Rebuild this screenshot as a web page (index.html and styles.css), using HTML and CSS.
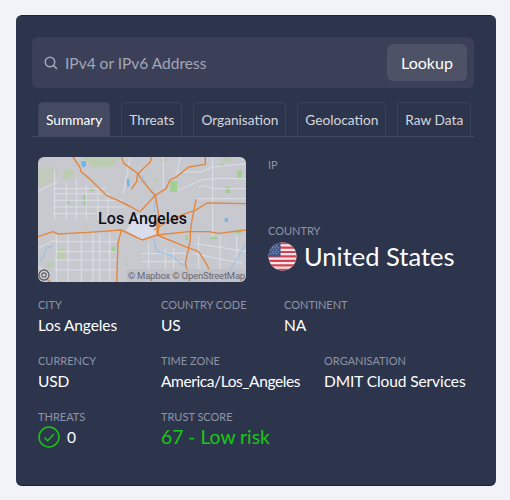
FILE: index.html
```html
<!DOCTYPE html>
<html lang="en">
<head>
<meta charset="utf-8">
<title>IP Lookup</title>
<link rel="stylesheet" href="styles.css">
</head>
<body>
<main class="card">
  <form class="search">
    <svg class="search-icon" viewBox="0 0 14 14" width="14" height="14"><circle cx="6" cy="6" r="4.7"/><path d="M9.5 9.5L13 13"/></svg>
    <span class="placeholder">IPv4 or IPv6 Address</span>
    <span class="lookup">Lookup</span>
  </form>
  <nav class="tabs">
    <span class="tab active">Summary</span>
    <span class="tab">Threats</span>
    <span class="tab">Organisation</span>
    <span class="tab">Geolocation</span>
    <span class="tab">Raw Data</span>
  </nav>
  <section class="top">
    <div class="map">
      <svg class="map-art" viewBox="24 21 624 375" preserveAspectRatio="none">
        <rect x="24" y="21" width="624" height="375" fill="#c8c9cf"/>
        <g fill="#bcccb0">
          <path d="M24 55l40-8 26 22-20 28-46 12z" fill="#c2c9bd"/>
          <path d="M154 21h120l-30 30h-55l-15-14z"/>
          <path d="M100 62l28-4 4 22-34 8z"/>
          <path d="M371 86l13 -3 1 10-14 3z"/>
          <path d="M79 295h26l4 30-25 8z"/>
          <path d="M49 340l22-4-2 16-20 3z"/>
          <path d="M395 25h18l-6 12h-14z" fill="#c8c4aa"/>
          <path d="M578 21h24v14h-24z"/>
        </g>
        <g fill="#9fd091">
          <path d="M421 93h20v33h-20z"/><path d="M586 109h15v21h-15z"/><path d="M621 61h15v22h-15z"/>
          <path d="M571 41h10v7h-10z"/><path d="M179 118h13v6h-13z"/><path d="M109 151h10v12h-10z"/>
          <path d="M159 136h10v30h-10z"/><path d="M244 290h12v15h-12z"/><path d="M466 255h8v15h-8z"/>
          <path d="M541 260h21v8h-21z"/><path d="M616 240h20v10h-20z"/><path d="M286 340h8v4h-8z"/>
        </g>
        <g class="minor">
          <path d="M24 124l60-30M69 116h160M69 131h170M69 151h210M69 171h220M69 191h130M74 60v150M109 96v114M139 86v124M169 106v104M204 116v94M234 136v74"/>
          <path d="M300 21l-20 110M400 21v100M450 21l-10 60"/>
          <path d="M24 295l50-25M74 275h186M74 305h186M74 330h186M74 360h186M79 250v150M114 250v150M154 250v150M189 250v150M209 250v150M239 250v150"/>
          <path d="M336 310h130M336 335h130M336 360h130M356 275v125M406 290v110M431 295v105"/>
          <path d="M496 280l152 25M486 310l150 30M506 255v110M548 21v240M548 86h100M506 91l42-5M506 111l20-5 22 10h100M446 121l65-30M501 146h147M436 66h75l35-15 102-10"/>
          <path d="M570 255v141M620 255v80M24 350l40 20"/>
        </g>
        <path d="M288 240l36-48 60 42-4 22-50 18z" fill="#d9dcea"/>
        <g class="water-line">
          <path d="M336 76l10 25 15 20 15 25 -4 40"/>
          <path d="M371 265l10 40 40 10 45 35"/>
          <path d="M648 280l-47 80"/>
          <path d="M69 288l-20 7-10 25-10 15"/>
        </g>
        <g fill="#6fb6e8">
          <path d="M154 33h13l2 13-9 7-6-8z"/><path d="M290 88h8l1 20-7 3z"/><path d="M584 205h10v11h-10z"/>
        </g>
        <g class="road">
          <path d="M129 21l20 30 5 15 25 20 25 25 25 25 45 20 30 15 26 15"/>
          <path d="M274 21l8 20 42 30 12 20 30 35 10 10 9 54v60"/>
          <path d="M364 21l-3 15-25 23-14 16-2 20-16 23"/>
          <path d="M526 21v22l-50 8-40 32-15 6-13 27-32 20-46 49"/>
          <path d="M24 260l45-15 15 7 90-5 100-7 62 30 45-15 95-10h60l30 5 82-10"/>
          <path d="M274 240l-10 40-4 120"/>
          <path d="M648 161l-117-2-35 22-30 10-45 19-50 30"/>
          <path d="M498 149l-7 37-5 24-5 35v25l-15 70 10 35 5 24"/>
          <path d="M381 255l85 35 40 15 25 40 25 54"/>
          <path d="M381 210v45M387 222l-3 33"/>
          <path d="M24 375l30 15 10 9"/>
        </g>
      </svg>
      <span class="city-label">Los Angeles</span>
      <span class="attribution">© Mapbox © OpenStreetMap</span>
      <svg class="map-logo" viewBox="0 0 12 12" width="12" height="12"><circle cx="6" cy="6" r="5" class="logo-ring"/><circle cx="6" cy="6" r="2.2" class="logo-core"/></svg>
    </div>
    <div class="headline">
      <div class="ip"><div class="label">IP</div></div>
      <div class="label">COUNTRY</div>
      <div class="country">
        <svg class="flag" viewBox="0 0 30 30" width="29" height="29">
          <defs><clipPath id="round"><circle cx="15" cy="15" r="14.5"/></clipPath></defs>
          <g clip-path="url(#round)">
            <rect width="30" height="30" fill="#f2e9ea"/>
            <path class="stripe" d="M0 0h30v2.4H0zM0 4.6h30v2.3H0zM0 9.2h30v2.3H0zM0 13.8h30v2.3H0zM0 18.4h30v2.3H0zM0 23h30v2.3H0zM0 27.6h30v2.4H0z"/>
            <rect width="13" height="15" fill="#3d5587"/>
            <path class="stars" d="M3 4h.01M6 4h.01M9 4h.01M4.500 6h.01M7.500 6h.01M10.500 6h.01M3 8h.01M6 8h.01M9 8h.01M4.500 10h.01M7.500 10h.01M10.500 10h.01M3 12h.01M6 12h.01M9 12h.01"/>
          </g>
        </svg>
        <span>United States</span>
      </div>
    </div>
  </section>
  <section class="facts">
    <div class="fact"><div class="label">CITY</div><div class="value">Los Angeles</div></div>
    <div class="fact"><div class="label">COUNTRY CODE</div><div class="value">US</div></div>
    <div class="fact"><div class="label">CONTINENT</div><div class="value">NA</div></div>
  </section>
  <section class="facts">
    <div class="fact"><div class="label">CURRENCY</div><div class="value">USD</div></div>
    <div class="fact"><div class="label">TIME ZONE</div><div class="value tz">America/Los_Angeles</div></div>
    <div class="fact"><div class="label">ORGANISATION</div><div class="value">DMIT Cloud Services</div></div>
  </section>
  <section class="facts">
    <div class="fact"><div class="label">THREATS</div><div class="value threats">
      <svg class="check" viewBox="0 0 22 22" width="22" height="22"><circle cx="11" cy="11" r="10"/><path d="M6.500 11.500l3.200 3.200 6-6.500"/></svg>0</div></div>
    <div class="fact"><div class="label">TRUST SCORE</div><div class="value score">67 - Low risk</div></div>
  </section>
</main>
</body>
</html>
```
FILE: styles.css
```css
* { box-sizing: border-box; }
html, body { margin: 0; height: 100%; }
body {
  background: #f1f3f8;
  padding: 15px 14px 14px 16px;
  font-family: "Lato", sans-serif;
  color: #fff;
  overflow: hidden;
}
.card {
  width: 480px;
  height: 471px;
  background: #2d354d;
  border-radius: 6px;
  padding: 22px 22px 0 16px;
  border-top: 1px solid #1c2236;
  border-bottom: 1px solid #1c2236;
}
.search {
  display: flex;
  align-items: center;
  height: 51px;
  width: 442px;
  margin-top: -1px;
  padding: 0 7px 0 12px;
  background: #3b3f58;
  border-radius: 6px;
}
.search-icon { fill: none; stroke: #a3a7b4; stroke-width: 1.6; margin-right: 7px; }
.placeholder { flex: 1; font-size: 15.5px; color: #a3a7b4; }
.lookup {
  width: 80px;
  height: 37px;
  display: flex;
  align-items: center;
  justify-content: center;
  background: #4e5267;
  border-radius: 6px;
  font-size: 16px;
}
.tabs {
  display: flex;
  gap: 11px;
  margin-top: 14px;
  width: 442px;
  height: 35px;
  padding-left: 6px;
  border-bottom: 1px solid #414962;
}
.tab {
  height: 34px;
  padding: 0 7px;
  display: flex;
  align-items: center;
  font-size: 13.7px;
  color: #d4d6de;
  border: 1px solid #3c4460;
  border-bottom: 0;
  border-radius: 5px 5px 0 0;
  white-space: nowrap;
}
.tab.active { background: #434a62; color: #fff; }
.top { display: flex; gap: 22px; margin: 20px 0 0 6px; }
.map {
  position: relative;
  width: 208px;
  height: 125px;
  border-radius: 6px;
  overflow: hidden;
}
.map-art { display: block; width: 100%; height: 100%; }
.minor { fill: none; stroke: #dcdfe9; stroke-width: 3; }
.water-line { fill: none; stroke: #7fbcea; stroke-width: 2.4; }
.road { fill: none; stroke: #e2873f; stroke-width: 4.2; stroke-linejoin: round; }
.city-label {
  position: absolute;
  left: 1px; right: 0; top: 52px;
  text-align: center;
  font-family: "Roboto", sans-serif;
  font-size: 16px;
  font-weight: 500;
  letter-spacing: .1px;
  color: #0b0d14;
}
.attribution {
  position: absolute;
  right: 0; bottom: 0;
  padding: 0 1px 0 2px;
  background: rgba(190, 191, 199, .8);
  font-family: "Roboto", sans-serif;
  font-size: 9.5px;
  letter-spacing: -.2px;
  line-height: 13px;
  color: #666a75;
  white-space: nowrap;
}
.map-logo { position: absolute; left: 0; bottom: 1px; }
.logo-ring { fill: #d0d1d6; stroke: #5c5f68; stroke-width: 1.3; }
.logo-core { fill: none; stroke: #5c5f68; stroke-width: 1.2; }
.headline { display: flex; flex-direction: column; }
.ip { height: 66px; }
.label { font-size: 11px; line-height: 16px; color: #8f94a4; }
.country { display: flex; align-items: center; gap: 7px; font-size: 25.500px; line-height: 30px; margin-top: 2px; }
.stripe { fill: #d93f50; }
.stars { fill: none; stroke: #c9d2e6; stroke-width: 1.1; stroke-linecap: round; }
.facts { display: flex; gap: 24px; margin: 15px 0 0 6px; }
.fact { min-width: 99px; height: 41px; }
.value { font-size: 15.5px; letter-spacing: -.1px; line-height: 24px; color: #fff; white-space: nowrap; }
.tz { letter-spacing: -.4px; }
.threats { display: flex; align-items: center; gap: 7px; }
.check { fill: none; stroke: #17c811; stroke-width: 1.5; }
.score { color: #17c811; font-size: 19.3px; letter-spacing: 0; }
```
